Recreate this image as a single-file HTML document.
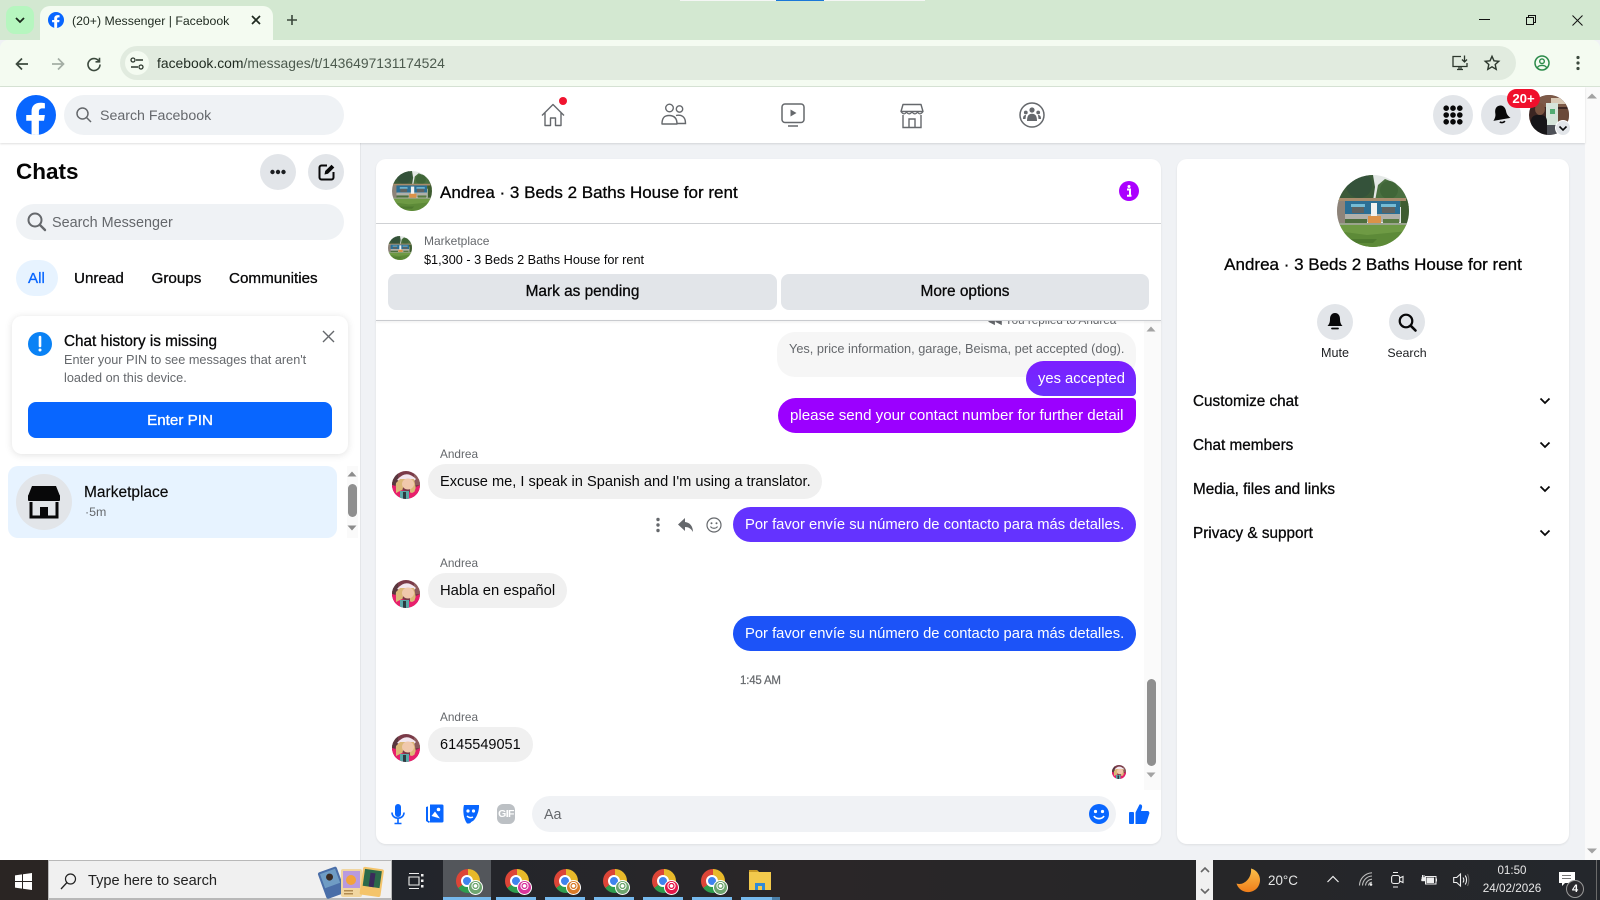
<!DOCTYPE html>
<html><head><meta charset="utf-8"><title>Messenger</title>
<style>
html,body{margin:0;padding:0;width:1600px;height:900px;overflow:hidden;background:#f0f2f5;font-family:"Liberation Sans",sans-serif;color:#080809}
.a{position:absolute}
.t{position:absolute;white-space:nowrap;line-height:20px;font-size:14.3px;margin-top:1px}
.z{margin-top:0}
.sb{-webkit-text-stroke:.3px currentColor;font-size:15.2px}
.g{color:#65686c}
.c{border-radius:50%;position:absolute}
.b{position:absolute;border-radius:18px}
.m{font-size:14.75px}
svg{position:absolute;overflow:visible}
.ch{position:absolute;width:24px;height:24px;top:869px;border-radius:50%;background:conic-gradient(#e8b92a 0 115deg,#2f9e4f 115deg 235deg,#dc4537 235deg 360deg)}
.ch:before{content:"";position:absolute;left:5px;top:6px;width:8px;height:8px;border-radius:50%;background:#3f83ee;border:2px solid #fff}
.ch:after{content:"";position:absolute;left:12px;top:11px;width:15px;height:15px;border-radius:50%;background:radial-gradient(circle at 50% 38%,#fff 0 1.6px,var(--k) 2px 3px,#fff 3.2px 3.9px,var(--k) 4.2px);border:1.2px solid #fff;box-sizing:border-box}
.u{position:absolute;top:897px;height:3px;background:#76b9ed}
</style></head><body>
<svg width="0" height="0" style="position:absolute"><defs>
<clipPath id="hc"><circle cx="36" cy="36" r="36"/></clipPath>
<symbol id="house" viewBox="0 0 72 72"><g clip-path="url(#hc)">
<rect width="72" height="72" fill="#e4e8e6"/>
<path d="M0 26V8L18 0H36L38 12L36 26Z" fill="#3b5a38"/><circle cx="22" cy="10" r="13" fill="#34523a"/>
<path d="M38 26L41 10L48 4L58 8L72 20V32H40Z" fill="#4a7040"/><circle cx="52" cy="15" r="9" fill="#406638"/>
<rect x="0" y="26" width="10" height="24" fill="#8d8379"/><rect x="64" y="24" width="8" height="26" fill="#3e5c30"/>
<rect x="2" y="23" width="67" height="3" fill="#a88c6c"/>
<rect x="8" y="26" width="55" height="13" fill="#2b6f95"/>
<rect x="8" y="39" width="55" height="8" fill="#b0b0aa"/>
<rect x="14" y="29" width="14" height="3" fill="#74bcd6"/><rect x="44" y="29" width="15" height="3" fill="#74bcd6"/>
<rect x="15" y="32" width="12" height="6" fill="#5e6362"/><rect x="45" y="32" width="13" height="6" fill="#5e6362"/>
<rect x="34" y="28" width="6" height="14" fill="#f2f2f0"/><rect x="31" y="41" width="13" height="8" fill="#dc9248"/>
<rect x="8" y="44" width="22" height="4" fill="#4d6e3d"/><rect x="46" y="44" width="16" height="4" fill="#5a7c42"/>
<rect x="0" y="48" width="72" height="3" fill="#9aa48d"/>
<rect x="0" y="50" width="72" height="22" fill="#6e9a44"/>
<path d="M0 56L30 60L72 56V72H0Z" fill="#5d8a38"/><path d="M10 64H40L36 68H16Z" fill="#4e7a2f"/>
</g></symbol>
<clipPath id="wc"><circle cx="14" cy="14" r="14"/></clipPath>
<symbol id="wom" viewBox="0 0 28 28"><g clip-path="url(#wc)">
<rect width="28" height="28" fill="#7a3a48"/>
<rect x="0" y="0" width="6" height="16" fill="#59373e"/><rect x="22" y="0" width="6" height="14" fill="#8c5a5c"/>
<path d="M5 9Q14 -2 24 8L22 10H8Z" fill="#f2e6ee"/>
<path d="M4 12L8 8H22L24 18L22 24H18V13H12L9 24H3Z" fill="#dcb878"/>
<ellipse cx="16" cy="13" rx="6" ry="5.5" fill="#f0c8ac"/>
<path d="M0 14L4 15V28H0ZM24 16L28 14V28H20Z" fill="#e8206c"/>
<path d="M0 24L10 19L20 22L28 18V28H0Z" fill="#e8206c"/><path d="M8 20H17V28H8Z" fill="#5aa8a8"/><path d="M11 21H14V28H11Z" fill="#2c3a40"/>
</g></symbol>
<symbol id="fb" viewBox="0 0 36 36"><circle cx="18" cy="18" r="18" fill="#0866ff"/><path d="M25.2 23.2L26 18H20.6V15C20.6 13.2 21.6 12 23.8 12H26V7.4C25 7.2 23.4 7 22 7C17.2 7 14 9.6 14 14.6V18H9.2V23.2H14V35.6C15.2 35.9 16.6 36 18 36C18.9 36 19.8 35.9 20.6 35.8V23.2Z" fill="#fff"/></symbol>
</defs></svg>

<!-- browser chrome -->
<div class="a" style="left:0;top:0;width:1600px;height:40px;background:#d3e8d1"></div>
<div class="a" style="left:680px;top:0;width:245px;height:1px;background:#f4f6f4"></div>
<div class="a" style="left:776px;top:0;width:48px;height:1px;background:#1a78d8"></div>
<div class="a" style="left:6px;top:6px;width:28px;height:28px;border-radius:9px;background:#b6f6bf"></div>
<svg style="left:14px;top:15px" width="12" height="10"><path d="M2 3L6 7L10 3" fill="none" stroke="#1a2a1c" stroke-width="1.8"/></svg>
<div class="a" style="left:40px;top:6px;width:233px;height:34px;border-radius:10px 10px 0 0;background:#f4fbf1"></div>
<svg style="left:48px;top:12px" width="16" height="16"><use href="#fb" width="16" height="16"/></svg>
<div class="t" style="left:72px;top:10px;font-size:12.3px;color:#1f2a20">(20+) Messenger | Facebook</div>
<svg style="left:251px;top:15px" width="10" height="10"><path d="M1 1L9 9M9 1L1 9" stroke="#1f2a20" stroke-width="1.7"/></svg>
<svg style="left:286px;top:14px" width="12" height="12"><path d="M6 1V11M1 6H11" stroke="#3a473b" stroke-width="1.6"/></svg>
<svg style="left:1479px;top:19px" width="12" height="2"><path d="M0 .5H11" stroke="#111" stroke-width="1"/></svg>
<svg style="left:1526px;top:15px" width="11" height="11"><path d="M.5 2.5H7.5V9.5H.5ZM2.5 2.5V.5H9.5V7.5H7.5" fill="none" stroke="#111" stroke-width="1"/></svg>
<svg style="left:1572px;top:15px" width="11" height="11"><path d="M.5 .5L10.5 10.5M10.5 .5L.5 10.5" stroke="#111" stroke-width="1"/></svg>

<div class="a" style="left:0;top:40px;width:1600px;height:46px;background:#f4fbf1;border-radius:8px 8px 0 0"></div>
<div class="a" style="left:0;top:86px;width:1600px;height:1px;background:#d7e3d5"></div>
<svg style="left:15px;top:57px" width="14" height="14"><path d="M13 7H2M7 1.5L1.5 7L7 12.5" fill="none" stroke="#3c4a3e" stroke-width="1.7"/></svg>
<svg style="left:51px;top:57px" width="14" height="14"><path d="M1 7H12M7 1.5L12.5 7L7 12.5" fill="none" stroke="#a4aea5" stroke-width="1.7"/></svg>
<svg style="left:87px;top:57px" width="14" height="14"><path d="M12 4.2A6 6 0 1 0 13 7.5M12.5 .8V4.8H8.5" fill="none" stroke="#3c4a3e" stroke-width="1.6"/></svg>
<div class="a" style="left:120px;top:46px;width:1396px;height:34px;border-radius:17px;background:#e1ebdf"></div>
<div class="c" style="left:125px;top:51px;width:24px;height:24px;background:#f4fbf1"></div>
<svg style="left:130px;top:57px" width="14" height="13"><path d="M6 3H13M1 10H8" stroke="#2c372d" stroke-width="1.4"/><circle cx="3" cy="3" r="2" fill="none" stroke="#2c372d" stroke-width="1.3"/><circle cx="11" cy="10" r="2" fill="none" stroke="#2c372d" stroke-width="1.3"/></svg>
<div class="t z" style="left:157px;top:53px;font-size:13.9px;color:#1f2a20" id="url">facebook.com<span style="color:#4c5a4e">/messages/t/1436497131174524</span></div>
<svg style="left:1452px;top:55px" width="17" height="16"><path d="M9 1.5H1V11.5H15V8M5 14.5H11M7 11.5V14.5M9 11.5V14.5" fill="none" stroke="#2c372d" stroke-width="1.3"/><path d="M12.5 .5V6.5M10 4.5L12.5 7L15 4.5" fill="none" stroke="#2c372d" stroke-width="1.3"/></svg>
<svg style="left:1484px;top:55px" width="16" height="16"><path d="M8 1.3L10 5.8L14.8 6.3L11.2 9.5L12.2 14.3L8 11.8L3.8 14.3L4.8 9.5L1.2 6.3L6 5.8Z" fill="none" stroke="#2c372d" stroke-width="1.4"/></svg>
<svg style="left:1534px;top:55px" width="16" height="16"><circle cx="8" cy="8" r="7" fill="none" stroke="#2a8a49" stroke-width="1.5"/><circle cx="8" cy="6.2" r="2.3" fill="none" stroke="#2a8a49" stroke-width="1.4"/><path d="M3.5 12.5C5 9.8 11 9.8 12.5 12.5" fill="none" stroke="#2a8a49" stroke-width="1.4"/></svg>
<svg style="left:1576px;top:55px" width="4" height="16"><circle cx="2" cy="2.5" r="1.6" fill="#3c4a3e"/><circle cx="2" cy="8" r="1.6" fill="#3c4a3e"/><circle cx="2" cy="13.5" r="1.6" fill="#3c4a3e"/></svg>

<!-- top nav -->
<div class="a" style="left:0;top:87px;width:1585px;height:56px;background:#fff;box-shadow:0 1px 2px rgba(0,0,0,.13);z-index:3"></div>
<div class="a" style="left:1585px;top:87px;width:15px;height:773px;background:#fafafa"></div>
<svg style="left:1587px;top:93px" width="10" height="6"><path d="M0 5.5L5 .5L10 5.5Z" fill="#a3a3a3"/></svg>
<svg style="left:1587px;top:848px" width="10" height="6"><path d="M0 .5L5 5.5L10 .5Z" fill="#a3a3a3"/></svg>
<div style="position:absolute;left:0;top:0;z-index:4">
<svg style="left:16px;top:95px" width="40" height="40"><use href="#fb" width="40" height="40"/></svg>
<div class="a" style="left:64px;top:95px;width:280px;height:40px;border-radius:20px;background:#eff2f5"></div>
<svg style="left:76px;top:107px" width="16" height="16"><circle cx="6.5" cy="6.5" r="5.5" fill="none" stroke="#65686c" stroke-width="1.5"/><path d="M10.5 10.5L15 15" stroke="#65686c" stroke-width="1.5"/></svg>
<div class="t g" style="left:100px;top:105px;font-size:14.2px">Search Facebook</div>

<svg style="left:541px;top:103px" width="24" height="24"><path d="M1 12.5L12 1.5L23 12.5M4 10V22.5H9.5V15H14.5V22.5H20V10" fill="none" stroke="#65686c" stroke-width="1.4" stroke-linejoin="round"/></svg>
<div class="c" style="left:559px;top:97px;width:8px;height:8px;background:#f0142f"></div>
<svg style="left:661px;top:103px" width="25" height="22"><circle cx="8.5" cy="5" r="3.8" fill="none" stroke="#65686c" stroke-width="1.4"/><circle cx="18.5" cy="6" r="3.2" fill="none" stroke="#65686c" stroke-width="1.4"/><path d="M1 21C1 14 4 12.5 8 12.5C12 12.5 16 14 16 21Z" fill="none" stroke="#65686c" stroke-width="1.4" stroke-linejoin="round"/><path d="M15 12.5C20 11.5 24.5 13 24.5 20.5H16" fill="none" stroke="#65686c" stroke-width="1.4"/></svg>
<svg style="left:781px;top:103px" width="24" height="26"><rect x="1" y="1" width="22" height="18.5" rx="3" fill="none" stroke="#65686c" stroke-width="1.5"/><path d="M9.5 6.5L15.5 10L9.5 13.5Z" fill="#65686c"/><path d="M7 23H17" stroke="#65686c" stroke-width="1.5"/></svg>
<svg style="left:900px;top:103px" width="24" height="26"><path d="M3 1.5H21L23 8.5H1Z" fill="none" stroke="#65686c" stroke-width="1.4" stroke-linejoin="round"/><path d="M1 8.5C3 11.5 5 11.5 6.5 9C8 11.5 10 11.5 12 9C14 11.5 16 11.5 17.5 9C19 11.5 21 11.5 23 8.5" fill="none" stroke="#65686c" stroke-width="1.2"/><path d="M3 12V24.5H21V12M9 24.5V16H15V24.5" fill="none" stroke="#65686c" stroke-width="1.4"/></svg>
<svg style="left:1019px;top:102px" width="26" height="26"><circle cx="13" cy="13" r="12" fill="none" stroke="#65686c" stroke-width="1.5"/><circle cx="13" cy="8" r="2.6" fill="#65686c"/><circle cx="6.8" cy="10.5" r="1.9" fill="#65686c"/><circle cx="19.2" cy="10.5" r="1.9" fill="#65686c"/><path d="M8 19C8 13.5 10 11.8 13 11.8C16 11.8 18 13.5 18 19Z" fill="#65686c"/><path d="M4 17C4 14 5 13 7 13L6.5 17ZM22 17C22 14 21 13 19 13L19.5 17Z" fill="#65686c"/></svg>

<div class="c" style="left:1433px;top:95px;width:40px;height:40px;background:#e2e5e9"></div>
<svg style="left:1443px;top:105px" width="20" height="20" fill="#080809"><circle cx="3.2" cy="3.2" r="2.8"/><circle cx="10" cy="3.2" r="2.8"/><circle cx="16.8" cy="3.2" r="2.8"/><circle cx="3.2" cy="10" r="2.8"/><circle cx="10" cy="10" r="2.8"/><circle cx="16.8" cy="10" r="2.8"/><circle cx="3.2" cy="16.8" r="2.8"/><circle cx="10" cy="16.8" r="2.8"/><circle cx="16.8" cy="16.8" r="2.8"/></svg>
<div class="c" style="left:1481px;top:95px;width:40px;height:40px;background:#e2e5e9"></div>
<svg style="left:1492px;top:105px" width="18" height="20"><g transform="rotate(-10 9 9)"><path d="M9 .5C5 .5 3.5 4 3.5 7.5C3.5 10.5 2 12.5 .3 14.5H17.7C16 12.5 14.5 10.5 14.5 7.5C14.5 4 13 .5 9 .5Z" fill="#080809"/><path d="M6.5 16.5C7.5 18 10.5 18 11.5 16.5" fill="none" stroke="#080809" stroke-width="1.6"/></g></svg>
<div class="a" style="left:1529px;top:95px;width:40px;height:40px;border-radius:50%;overflow:hidden;background:#3c2622">
  <div class="a" style="left:0;top:0;width:40px;height:12px;background:#7d5a48"></div>
  <div class="a" style="left:22px;top:3px;width:18px;height:6px;background:#d8c8b4"></div>
  <div class="a" style="left:17px;top:8px;width:12px;height:24px;background:#d6e4da"></div>
  <div class="a" style="left:21px;top:14px;width:5px;height:5px;background:#52ac72"></div>
  <div class="a" style="left:6px;top:8px;width:10px;height:12px;border-radius:50%;background:#7a5440"></div>
  <div class="a" style="left:2px;top:20px;width:16px;height:20px;background:#161518;border-radius:6px 6px 0 0"></div>
  <div class="a" style="left:29px;top:14px;width:11px;height:14px;background:#6b4a3a"></div>
  <div class="a" style="left:18px;top:30px;width:22px;height:10px;background:#4e5158"></div>
</div>
<div class="c" style="left:1556px;top:121px;width:14px;height:14px;background:#e2e5e9;border:1px solid #fff;box-sizing:content-box;margin:-1px"></div>
<svg style="left:1558px;top:125px" width="10" height="7"><path d="M1.5 1.5L5 5L8.5 1.5" fill="none" stroke="#080809" stroke-width="1.6"/></svg>
<div class="a" style="left:1507px;top:89px;width:33px;height:19px;border-radius:10px;background:#f0102c;color:#fff;font-size:13.2px;font-weight:700;line-height:19px;text-align:center">20+</div>
</div>

<!-- left panel -->
<div class="a" style="left:0;top:143px;width:360px;height:717px;background:#fff;border-right:1px solid #e4e6e9"></div>
<div class="t z" style="left:16px;top:162px;font-size:22.5px;font-weight:700;line-height:20px;color:#050505">Chats</div>
<div class="c" style="left:260px;top:154px;width:36px;height:36px;background:#e2e5e9"></div>
<svg style="left:270px;top:169px" width="16" height="6" fill="#1c1e21"><circle cx="2.5" cy="3" r="2.2"/><circle cx="8" cy="3" r="2.2"/><circle cx="13.5" cy="3" r="2.2"/></svg>
<div class="c" style="left:308px;top:154px;width:36px;height:36px;background:#e2e5e9"></div>
<svg style="left:318px;top:163px" width="18" height="18"><path d="M9 2.5H3.5A2 2 0 0 0 1.5 4.5V14.5A2 2 0 0 0 3.5 16.5H13.5A2 2 0 0 0 15.5 14.5V9" fill="none" stroke="#080809" stroke-width="2"/><path d="M6.5 11.5L7.2 8L13.5 1.7L16.3 4.5L10 10.8Z" fill="#080809"/></svg>
<div class="a" style="left:16px;top:204px;width:328px;height:36px;border-radius:18px;background:#eff2f5"></div>
<svg style="left:27px;top:212px" width="19" height="19"><circle cx="8" cy="8" r="6.5" fill="none" stroke="#65686c" stroke-width="2"/><path d="M12.8 12.8L18 18" stroke="#65686c" stroke-width="2.4" stroke-linecap="round"/></svg>
<div class="t g" style="left:52px;top:212px;font-size:14.4px">Search Messenger</div>
<div class="a" style="left:16px;top:260px;width:42px;height:36px;border-radius:18px;background:#e7f3ff"></div>
<div class="t sb" style="left:28px;top:268px;color:#0866ff">All</div>
<div class="t sb" style="left:74px;top:268px">Unread</div>
<div class="t sb" style="left:151.5px;top:268px">Groups</div>
<div class="t sb" style="left:229px;top:268px">Communities</div>

<div class="a" style="left:12px;top:316px;width:336px;height:138px;border-radius:10px;background:#fff;box-shadow:0 1px 8px rgba(0,0,0,.12)"></div>
<div class="c" style="left:28px;top:332px;width:24px;height:24px;background:#0a82f5"></div>
<svg style="left:38px;top:336px" width="4" height="16"><path d="M2 1V10" stroke="#fff" stroke-width="2.6" stroke-linecap="round"/><circle cx="2" cy="14" r="1.5" fill="#fff"/></svg>
<div class="t sb" style="left:64px;top:331px;font-size:15.3px">Chat history is missing</div>
<div class="t g z" style="left:64px;top:352px;font-size:12.7px;line-height:16px">Enter your PIN to see messages that aren't</div>
<div class="t g z" style="left:64px;top:370px;font-size:12.7px;line-height:16px">loaded on this device.</div>
<svg style="left:322px;top:330px" width="13" height="13"><path d="M1 1L12 12M12 1L1 12" stroke="#65686c" stroke-width="1.4"/></svg>
<div class="a" style="left:28px;top:402px;width:304px;height:36px;border-radius:8px;background:#0866ff"></div>
<div class="t sb" style="left:28px;width:304px;top:410px;text-align:center;color:#fff">Enter PIN</div>

<div class="a" style="left:8px;top:466px;width:329px;height:72px;border-radius:10px;background:#e7f3ff"></div>
<div class="c" style="left:16px;top:474px;width:56px;height:56px;background:#e2e5e9"></div>
<svg style="left:27px;top:485px" width="34" height="34"><path d="M5 1H29L33 11H1Z" fill="#080809"/><rect x="1" y="10" width="32" height="6" rx="1" fill="#080809"/><path d="M4 17V32H30V17" fill="none" stroke="#080809" stroke-width="3"/><path d="M13 32V22H21V32Z" fill="#080809"/></svg>
<div class="t" style="left:84px;top:482px;font-size:15.5px;-webkit-text-stroke:.15px #080809">Marketplace</div>
<div class="t g z" style="left:85px;top:502px;font-size:12.4px">·5m</div>
<div class="a" style="left:347px;top:466px;width:11px;height:72px;background:#fafafa"></div>
<svg style="left:347px;top:471px" width="10" height="6"><path d="M.5 5.5L5 .5L9.5 5.5Z" fill="#8c8c8c"/></svg>
<div class="a" style="left:348px;top:484px;width:9px;height:33px;border-radius:5px;background:#8f8f8f"></div>
<svg style="left:347px;top:525px" width="10" height="6"><path d="M.5 .5L5 5.5L9.5 .5Z" fill="#8c8c8c"/></svg>

<!-- chat panel -->
<div class="a" style="left:376px;top:159px;width:785px;height:685px;border-radius:10px;background:#fff;box-shadow:0 1px 2px rgba(0,0,0,.08)"></div>
<svg style="left:392px;top:171px" width="40" height="40"><use href="#house" width="40" height="40"/></svg>
<div class="t sb" style="left:440px;top:182px;font-size:17px;color:#050505">Andrea · 3 Beds 2 Baths House for rent</div>
<div class="c" style="left:1119px;top:181px;width:20px;height:20px;background:#ab00ff"></div>
<svg style="left:1126px;top:185px" width="6" height="12"><circle cx="3" cy="1.5" r="1.5" fill="#fff"/><path d="M1 4.5H4V10.5M1 10.8H5.5" fill="none" stroke="#fff" stroke-width="2"/></svg>
<div class="a" style="left:376px;top:223px;width:785px;height:1px;background:#cfd1d4"></div>
<svg style="left:388px;top:236px" width="24" height="24"><use href="#house" width="24" height="24"/></svg>
<div class="t g z" style="left:424px;top:231px;font-size:12px">Marketplace</div>
<div class="t" style="left:424px;top:249px;font-size:12.7px">$1,300 - 3 Beds 2 Baths House for rent</div>
<div class="a" style="left:388px;top:274px;width:389px;height:36px;border-radius:8px;background:#e2e5e9"></div>
<div class="t sb" style="left:388px;width:389px;top:281px;text-align:center;font-size:15.4px">Mark as pending</div>
<div class="a" style="left:781px;top:274px;width:368px;height:36px;border-radius:8px;background:#e2e5e9"></div>
<div class="t sb" style="left:781px;width:368px;top:281px;text-align:center;font-size:15.4px">More options</div>

<!-- messages clipped area -->
<div class="a" style="left:376px;top:320px;width:785px;height:470px;overflow:hidden">
  <div class="a" style="left:768px;top:0;width:17px;height:470px;background:#fafafa"></div>
  <div class="t g z" style="left:612px;top:-9px;font-size:11.7px;line-height:20px"><span style="font-size:9px">◀◀</span> You replied to Andrea</div>
  <div class="b" style="left:401px;top:12px;width:359px;height:45px;background:#f6f6f6"></div>
  <div class="t g" style="left:413px;top:18px;font-size:12.75px">Yes, price information, garage, Beisma, pet accepted (dog).</div>
</div>
<div class="a" style="left:376px;top:320px;width:785px;height:1px;background:#c9cbcf;box-shadow:0 1px 2px rgba(0,0,0,.12)"></div>
<div class="b" style="left:1026px;top:361px;width:110px;height:35px;background:linear-gradient(#7c1eff,#6c30ff);border-radius:18px 18px 4px 18px"></div>
<div class="t m" style="left:1038px;top:368px;color:#fff">yes accepted</div>
<div class="b" style="left:778px;top:398px;width:358px;height:35px;background:#9b00ff;border-radius:18px 4px 18px 18px"></div>
<div class="t" style="left:790px;top:405px;color:#fff;font-size:15.12px">please send your contact number for further detail</div>

<div class="t g z" style="left:440px;top:444px;font-size:11.8px">Andrea</div>
<svg style="left:392px;top:471px" width="28" height="28"><use href="#wom" width="28" height="28"/></svg>
<div class="b" style="left:428px;top:464px;width:394px;height:35px;background:#f0f0f0"></div>
<div class="t" style="left:440px;top:471px;font-size:14.62px" id="m1">Excuse me, I speak in Spanish and I'm using a translator.</div>

<svg style="left:656px;top:517px" width="4" height="16" fill="#65686c"><circle cx="2" cy="2.5" r="1.7"/><circle cx="2" cy="8" r="1.7"/><circle cx="2" cy="13.5" r="1.7"/></svg>
<svg style="left:678px;top:517px" width="16" height="16"><path d="M7 1L0 7.5L7 14V10C10.5 10 13 11.5 15 15C15 9.5 12 5.5 7 5Z" fill="#65686c"/></svg>
<svg style="left:706px;top:517px" width="16" height="16"><circle cx="8" cy="8" r="7" fill="none" stroke="#65686c" stroke-width="1.2"/><circle cx="5.5" cy="6.2" r="1" fill="#65686c"/><circle cx="10.5" cy="6.2" r="1" fill="#65686c"/><path d="M4.5 9.5C5.8 11.8 10.2 11.8 11.5 9.5" fill="none" stroke="#65686c" stroke-width="1.2"/></svg>
<div class="b" style="left:733px;top:507px;width:403px;height:35px;background:#6433ff"></div>
<div class="t" style="left:745px;top:514px;color:#fff;font-size:14.78px">Por favor envíe su número de contacto para más detalles.</div>

<div class="t g z" style="left:440px;top:553px;font-size:11.8px">Andrea</div>
<svg style="left:392px;top:580px" width="28" height="28"><use href="#wom" width="28" height="28"/></svg>
<div class="b" style="left:428px;top:573px;width:139px;height:35px;background:#f0f0f0"></div>
<div class="t" style="left:440px;top:580px;font-size:14.8px">Habla en español</div>

<div class="b" style="left:733px;top:616px;width:403px;height:35px;background:#1c53f8"></div>
<div class="t" style="left:745px;top:623px;color:#fff;font-size:14.78px">Por favor envíe su número de contacto para más detalles.</div>

<div class="t g" style="left:740px;top:670px;font-size:11.5px;letter-spacing:-.2px;-webkit-text-stroke:.2px #65686c">1:45 AM</div>

<div class="t g z" style="left:440px;top:707px;font-size:11.8px">Andrea</div>
<svg style="left:392px;top:734px" width="28" height="28"><use href="#wom" width="28" height="28"/></svg>
<div class="b" style="left:428px;top:727px;width:105px;height:35px;background:#f0f0f0"></div>
<div class="t" style="left:440px;top:734px;font-size:14.5px">6145549051</div>
<svg style="left:1112px;top:765px" width="14" height="14"><use href="#wom" width="14" height="14"/></svg>

<svg style="left:1146px;top:326px" width="10" height="6"><path d="M.5 5.5L5 .5L9.5 5.5Z" fill="#a3a3a3"/></svg>
<div class="a" style="left:1147px;top:679px;width:9px;height:87px;border-radius:5px;background:#8f8f8f"></div>
<svg style="left:1146px;top:772px" width="10" height="6"><path d="M.5 .5L5 5.5L9.5 .5Z" fill="#a3a3a3"/></svg>

<!-- composer -->
<svg style="left:391px;top:804px" width="14" height="20"><rect x="4" y="0" width="6" height="13" rx="3" fill="#0866ff"/><path d="M1 8.5C1 16 13 16 13 8.5M7 14.5V19.5M3.5 19.5H10.5" fill="none" stroke="#0866ff" stroke-width="1.6"/></svg>
<svg style="left:425px;top:804px" width="19" height="20"><path d="M1 3L3 2.4V16.5L5 17.5L4 19L1 17Z" fill="#0866ff"/><path d="M5 .5H17A1.5 1.5 0 0 1 18.5 2V17A1.5 1.5 0 0 1 17 18.5H5Z" fill="#0866ff"/><circle cx="13.5" cy="5.5" r="1.8" fill="#fff"/><path d="M6.5 12L10 7.5L15 14.5Z" fill="#fff"/></svg>
<svg style="left:461px;top:804px" width="19" height="20"><path d="M3 1H18C18.5 8 14 18 8 19.5H6C2.5 15 1.5 6 3 1Z" fill="#0866ff"/><circle cx="7" cy="7" r="1.6" fill="#fff"/><circle cx="12.5" cy="7" r="1.6" fill="#fff"/><path d="M6 12C8 14 10 14 12 13" fill="none" stroke="#fff" stroke-width="1.4"/><path d="M10 19C15 17 17.5 13 18 9" fill="none" stroke="#fff" stroke-width="1.6"/></svg>
<div class="a" style="left:497px;top:804px;width:18px;height:20px;border-radius:6px;background:#bcc0c4;color:#fff;font-size:10.5px;font-weight:700;line-height:20px;text-align:center;letter-spacing:-.6px">GIF</div>
<div class="a" style="left:532px;top:796px;width:584px;height:36px;border-radius:18px;background:#f0f2f5"></div>
<div class="t g" style="left:544px;top:804px">Aa</div>
<svg style="left:1089px;top:804px" width="20" height="20"><circle cx="10" cy="10" r="10" fill="#0866ff"/><circle cx="6.5" cy="7.5" r="1.6" fill="#fff"/><circle cx="13.5" cy="7.5" r="1.6" fill="#fff"/><path d="M5 12C7 15.5 13 15.5 15 12" fill="none" stroke="#fff" stroke-width="1.7"/></svg>
<svg style="left:1128px;top:803px" width="22" height="22"><rect x="1" y="9" width="5" height="12" rx="1" fill="#0866ff"/><path d="M7.5 9.5L11.5 1.5C13.5 1 14.5 2.5 14 4.5L13 8H19.5C21 8 21.8 9.5 21.2 11L18.5 19.5C18 20.7 17 21 16 21H7.5Z" fill="#0866ff"/></svg>

<!-- right panel -->
<div class="a" style="left:1177px;top:159px;width:392px;height:685px;border-radius:10px;background:#fff;box-shadow:0 1px 2px rgba(0,0,0,.08)"></div>
<svg style="left:1337px;top:175px" width="72" height="72"><use href="#house" width="72" height="72"/></svg>
<div class="t sb" style="left:1177px;width:392px;top:254px;text-align:center;font-size:17px;color:#050505">Andrea · 3 Beds 2 Baths House for rent</div>
<div class="c" style="left:1317px;top:304px;width:36px;height:36px;background:#e2e5e9"></div>
<svg style="left:1327px;top:312px" width="16" height="20"><path d="M8 1C4.5 1 3 4 3 7C3 10.5 2 12.5 .5 14H15.5C14 12.5 13 10.5 13 7C13 4 11.5 1 8 1Z" fill="#080809"/><path d="M5 16.5H11" stroke="#080809" stroke-width="1.8" stroke-linecap="round"/></svg>
<div class="c" style="left:1389px;top:304px;width:36px;height:36px;background:#e2e5e9"></div>
<svg style="left:1398px;top:313px" width="19" height="19"><circle cx="8" cy="8" r="6.3" fill="none" stroke="#080809" stroke-width="2.2"/><path d="M12.8 12.8L17.5 17.5" stroke="#080809" stroke-width="2.6" stroke-linecap="round"/></svg>
<div class="t" style="left:1285px;width:100px;top:342px;text-align:center;font-size:12.6px;color:#1c1e21">Mute</div>
<div class="t" style="left:1357px;width:100px;top:342px;text-align:center;font-size:12.4px;color:#1c1e21">Search</div>
<div class="t sb" style="left:1193px;top:391px;font-size:15.3px">Customize chat</div>
<div class="t sb" style="left:1193px;top:435px;font-size:15.3px">Chat members</div>
<div class="t sb" style="left:1193px;top:479px;font-size:15.3px">Media, files and links</div>
<div class="t sb" style="left:1193px;top:523px;font-size:15.3px">Privacy &amp; support</div>
<svg style="left:1539px;top:397px" width="12" height="8"><path d="M1.5 1.5L6 6L10.5 1.5" fill="none" stroke="#080809" stroke-width="1.8"/></svg>
<svg style="left:1539px;top:441px" width="12" height="8"><path d="M1.5 1.5L6 6L10.5 1.5" fill="none" stroke="#080809" stroke-width="1.8"/></svg>
<svg style="left:1539px;top:485px" width="12" height="8"><path d="M1.5 1.5L6 6L10.5 1.5" fill="none" stroke="#080809" stroke-width="1.8"/></svg>
<svg style="left:1539px;top:529px" width="12" height="8"><path d="M1.5 1.5L6 6L10.5 1.5" fill="none" stroke="#080809" stroke-width="1.8"/></svg>

<!-- taskbar -->
<div class="a" style="left:0;top:860px;width:1600px;height:40px;background:linear-gradient(90deg,#2a2523 0,#2a2523 48px,#22252b 400px,#2a2628 800px,#262628 1200px,#24272c 1600px);z-index:5"></div>
<div style="position:absolute;left:0;top:0;z-index:6">
<svg style="left:15px;top:873px" width="17" height="17" fill="#fff"><path d="M0 2.4L7 1.4V8H0ZM8 1.2L17 0V8H8ZM0 9H7V15.6L0 14.6ZM8 9H17V17L8 15.8Z"/></svg>
<div class="a" style="left:48px;top:860px;width:344px;height:40px;background:#f0f0f0;border:1px solid #b8b8b8;border-bottom-width:2px;box-sizing:border-box"></div>
<svg style="left:60px;top:873px" width="17" height="17"><circle cx="10.5" cy="6" r="5" fill="none" stroke="#222" stroke-width="1.2"/><path d="M7 9.5L1 16" stroke="#222" stroke-width="1.3"/></svg>
<div class="t" style="left:88px;top:870px;font-size:14.6px;color:#222">Type here to search</div>
<svg style="left:316px;top:866px" width="72" height="32">
<g transform="rotate(-20 15 18)"><rect x="6" y="3" width="20" height="28" rx="2" fill="#4a6ea8"/><rect x="8" y="5" width="16" height="15" fill="#6f9cc4"/><circle cx="16" cy="11" r="3.5" fill="#3a2a22"/></g>
<rect x="25" y="3" width="21" height="28" rx="2" fill="#f1d6a0"/><rect x="27" y="5" width="17" height="17" fill="#b89adf"/><circle cx="35" cy="14" r="5" fill="#f2a33c"/><rect x="28" y="24" width="9" height="1.5" fill="#b08a50"/><rect x="28" y="27" width="9" height="1.5" fill="#b08a50"/>
<g transform="rotate(8 56 18)"><rect x="45" y="2" width="21" height="28" rx="2" fill="#f4c46a"/><rect x="47" y="4" width="17" height="17" fill="#2c6a4a"/><rect x="53" y="7" width="5" height="14" fill="#3a2a5a"/></g>
</svg>
<svg style="left:408px;top:873px" width="16" height="16" fill="none" stroke="#eee" stroke-width="1.1"><path d="M1 .5H11M1 15.5H11M1 4H11V12H1Z"/><rect x="13" y="1" width="2.5" height="2.5" fill="#eee" stroke="none"/><rect x="13" y="6.5" width="2.5" height="2.5" fill="#eee" stroke="none"/><rect x="13" y="12" width="2.5" height="2.5" fill="#eee" stroke="none"/></svg>
<div class="a" style="left:443px;top:860px;width:48px;height:40px;background:#53565b"></div>
<div class="ch" style="left:456px;--k:#6ea56f"></div>
<div class="ch" style="left:505px;--k:#d8359b"></div>
<div class="ch" style="left:554px;--k:#d97b28"></div>
<div class="ch" style="left:603px;--k:#6ea56f"></div>
<div class="ch" style="left:652px;--k:#e5174a"></div>
<div class="ch" style="left:701px;--k:#6ea56f"></div>
<svg style="left:749px;top:869px" width="22" height="22"><path d="M0 1H8L10 3H22V21H0Z" fill="#f2c94c"/><path d="M0 1H8L9 3H0Z" fill="#c99a25"/><path d="M6 21V14H16V21H13V17H9V21Z" fill="#2f8ad8"/></svg>
<div class="u" style="left:443px;width:48px"></div><div class="u" style="left:496px;width:40px"></div><div class="u" style="left:545px;width:40px"></div><div class="u" style="left:594px;width:40px"></div><div class="u" style="left:643px;width:40px"></div><div class="u" style="left:692px;width:40px"></div><div class="u" style="left:741px;width:31px"></div><div class="u" style="left:772px;width:8px;background:#4a7fa8"></div>

<div class="a" style="left:1196px;top:860px;width:17px;height:40px;background:#f0f0f0"></div>
<svg style="left:1200px;top:866px" width="10" height="8"><path d="M1 6L5 2L9 6" fill="none" stroke="#666" stroke-width="1.6"/></svg>
<svg style="left:1200px;top:887px" width="10" height="8"><path d="M1 2L5 6L9 2" fill="none" stroke="#666" stroke-width="1.6"/></svg>
<svg style="left:1236px;top:868px" width="24" height="24"><defs><linearGradient id="mg" x1="0" y1="0" x2="0" y2="1"><stop offset="0" stop-color="#fbc04a"/><stop offset="1" stop-color="#ef7d1a"/></linearGradient></defs><path d="M15 .5A12 12 0 1 1 .5 15.5C8 18 16 10 15 .5Z" fill="url(#mg)"/></svg>
<div class="t" style="left:1268px;top:870px;font-size:13.4px;color:#e6e6e6">20°C</div>
<svg style="left:1327px;top:875px" width="12" height="8"><path d="M.5 7L6 1.5L11.5 7" fill="none" stroke="#eee" stroke-width="1.2"/></svg>
<svg style="left:1359px;top:872px" width="14" height="14" fill="none" stroke="#bbb" stroke-width="1.1"><path d="M.5 13.5A13 13 0 0 1 13 .8M3.5 13.5A10 10 0 0 1 13 4M6.5 13.5A7 7 0 0 1 13 7.2M9.5 13.5A4 4 0 0 1 13 10.2"/><circle cx="12" cy="12.5" r="1.3" fill="#eee" stroke="none"/></svg>
<svg style="left:1391px;top:871px" width="13" height="18" fill="none" stroke="#eee" stroke-width="1.1"><rect x=".6" y="4.5" width="8" height="8" rx="2"/><path d="M8.6 7L12 5.5V11.5L8.6 10M2 1.5H7M2 16H7"/></svg>
<svg style="left:1421px;top:874px" width="16" height="12" fill="#eee"><rect x="4.5" y="2.5" width="10.5" height="7.5" fill="none" stroke="#eee"/><rect x="5.5" y="3.5" width="7.5" height="5.5"/><rect x="15" y="4.5" width="1" height="3"/><path d="M0 6H4M1.5 3.5V1M3 3.5V1" stroke="#eee"/><rect x=".6" y="3.2" width="3.4" height="4"/></svg>
<svg style="left:1453px;top:873px" width="16" height="14" fill="none" stroke="#eee" stroke-width="1.1"><path d="M.7 4.5H3.7L7.5 1V13L3.7 9.5H.7ZM10 4.5C11 6 11 8 10 9.5M12.2 2.5C14 5 14 9 12.2 11.5"/><path d="M14.5 1C16.3 4.5 16.3 9.5 14.5 13" stroke="#666"/></svg>
<div class="t z" style="left:1482px;width:60px;top:861px;text-align:center;font-size:11.6px;color:#e8e8e8">01:50</div>
<div class="t z" style="left:1482px;width:60px;top:879px;text-align:center;font-size:11.7px;color:#e8e8e8">24/02/2026</div>
<svg style="left:1559px;top:872px" width="16" height="15"><path d="M0 0H16V11H6L3 14V11H0Z" fill="#fff"/><path d="M3 3.5H12M3 6.5H12" stroke="#777" stroke-width="1"/></svg>
<div class="c" style="left:1566px;top:880px;width:16px;height:16px;border:1px solid #999;background:#2a2a2e;color:#fff;font-size:11px;font-weight:700;line-height:16px;text-align:center">4</div>
<div class="a" style="left:1596px;top:860px;width:1px;height:40px;background:#6a6a6a"></div>
</div>
</body></html>
